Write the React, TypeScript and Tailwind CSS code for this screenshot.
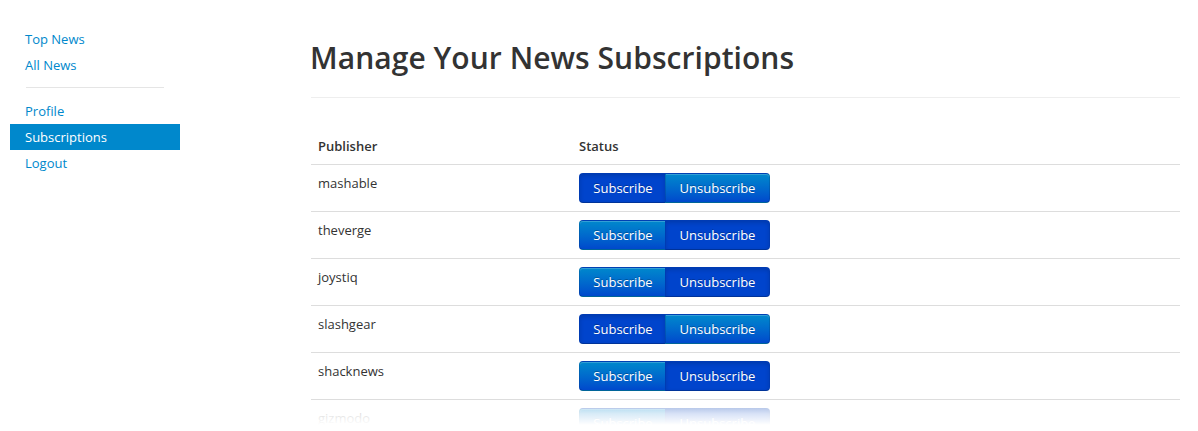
import React from "react";

const rows: { name: string; active: "sub" | "unsub" }[] = [
  { name: "mashable", active: "sub" },
  { name: "theverge", active: "unsub" },
  { name: "joystiq", active: "unsub" },
  { name: "slashgear", active: "sub" },
  { name: "shacknews", active: "unsub" },
  { name: "gizmodo", active: "unsub" },
];

function Btn({ label, active, left }: { label: string; active: boolean; left: boolean }) {
  const base =
    "h-[30px] flex items-center justify-center text-[13px] text-white border border-[rgba(0,0,0,0.12)] border-b-[rgba(0,0,0,0.25)] [text-shadow:0_-1px_0_rgba(0,0,0,0.25)]";
  const shape = left ? "w-[87px] rounded-l-[4px] pl-px" : "w-[105px] rounded-r-[4px] -ml-px";
  const color = active
    ? "bg-[#0044cc] shadow-[inset_0_2px_4px_rgba(0,0,0,0.15)]"
    : "bg-gradient-to-b from-[#0088cc] to-[#0048cc] shadow-[inset_0_1px_0_rgba(255,255,255,0.2)]";
  return <div className={`${base} ${shape} ${color}`}>{label}</div>;
}

export default function App() {
  return (
    <div
      className="relative h-[431px] w-[1198px] overflow-hidden bg-white text-[#333] flex"
      style={{ fontFamily: "'Open Sans', 'Liberation Sans', sans-serif" }}
    >
      <aside className="w-[170px] ml-[10px] pt-[26px] shrink-0 text-[13px]">
        <a className="block h-[26px] leading-[26px] pl-[15px] text-[#0088cc]">Top News</a>
        <a className="block h-[26px] leading-[26px] pl-[15px] text-[#0088cc]">All News</a>
        <div className="mx-[16px] mt-[9px] mb-[10px] h-px bg-[#e5e5e5]" />
        <a className="block h-[26px] leading-[26px] pl-[15px] text-[#0088cc]">Profile</a>
        <a className="block h-[26px] leading-[26px] pl-[15px] bg-[#0088cc] text-white">Subscriptions</a>
        <a className="block h-[26px] leading-[26px] pl-[15px] text-[#0088cc]">Logout</a>
      </aside>
      <main className="ml-[131px] mr-[18px] flex-1 pt-[38px]">
        <h1 className="text-[30px] leading-[40px] font-semibold text-[#333] -ml-px tracking-[0.05px]">
          Manage Your News Subscriptions
        </h1>
        <div className="mt-[19px] h-px bg-[#eeeeee]" />
        <table className="mt-[30px] w-full border-collapse text-[13px] leading-[20px]">
          <thead>
            <tr className="border-b border-[#dddddd]">
              <th className="w-[260px] text-left font-semibold px-[7px] py-[8px]">Publisher</th>
              <th className="text-left font-semibold px-[8px] py-[8px]">Status</th>
            </tr>
          </thead>
          <tbody>
            {rows.map((r) => (
              <tr key={r.name} className="border-b border-[#dddddd]">
                <td className="align-top px-[7px] pt-[8px] pb-[18px]">{r.name}</td>
                <td className="align-top px-[8px] py-[8px]">
                  <div className="flex">
                    <Btn label="Subscribe" active={r.active === "sub"} left />
                    <Btn label="Unsubscribe" active={r.active === "unsub"} left={false} />
                  </div>
                </td>
              </tr>
            ))}
          </tbody>
        </table>
      </main>
      <div className="pointer-events-none absolute left-0 right-0 top-[400px] h-[31px] bg-gradient-to-b from-[rgba(255,255,255,0.55)] via-[rgba(255,255,255,0.85)] via-45% to-white to-80%" />
    </div>
  );
}
